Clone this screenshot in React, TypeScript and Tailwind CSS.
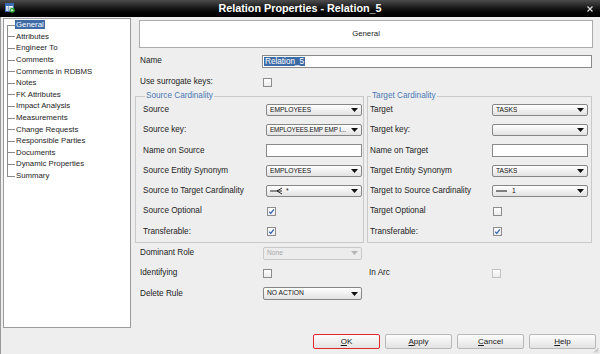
import React from 'react'

const tree = [
    'General',
    'Attributes',
    'Engineer To',
    'Comments',
    'Comments in RDBMS',
    'Notes',
    'FK Attributes',
    'Impact Analysis',
    'Measurements',
    'Change Requests',
    'Responsible Parties',
    'Documents',
    'Dynamic Properties',
    'Summary',
]

function Arrow({ disabled }: { disabled?: boolean }) {
    return (
        <svg viewBox="0 0 7 4" className="h-[4px] w-[7px] shrink-0">
            <path d="M0 0 H7 L3.5 4 Z" fill={disabled ? '#b4b4b4' : '#111'} />
        </svg>
    )
}

function Select({ children, className, disabled }: { children?: React.ReactNode; className: string; disabled?: boolean }) {
    return (
        <div
            className={`flex items-center justify-between gap-[1px] rounded-[2px] border pl-[3px] pr-[3px] leading-none ${
                disabled
                    ? 'border-[#c8c8c8] bg-[#ececec] text-[#a9a9a9]'
                    : 'border-[#868686] bg-gradient-to-b from-white to-[#e2e2e2] text-[#111]'
            } ${className}`}
        >
            <div className="flex min-w-0 items-center overflow-hidden whitespace-nowrap">{children}</div>
            <Arrow disabled={disabled} />
        </div>
    )
}

function Check({ on, disabled, className }: { on?: boolean; disabled?: boolean; className?: string }) {
    return (
        <div
            className={`flex h-[9px] w-[9px] items-center justify-center border bg-gradient-to-b from-white to-[#ebebeb] ${
                disabled ? 'border-[#c2c2c2]' : 'border-[#8c8c8c]'
            } ${className ?? ''}`}
        >
            {on && (
                <svg viewBox="0 0 8 8" className="h-[7px] w-[7px]">
                    <path d="M1.4 4.3 L3.2 6.1 L6.7 1.5" fill="none" stroke="#2d5fb4" strokeWidth="1.4" />
                </svg>
            )}
        </div>
    )
}

function Input({ className, children }: { className: string; children?: React.ReactNode }) {
    return <div className={`flex h-[13px] items-center border border-[#8a8a8a] bg-white ${className}`}>{children}</div>
}

function Row({ label, w, children }: { label: string; w: string; children?: React.ReactNode }) {
    return (
        <div className="flex h-[20.3px] items-center">
            <div className={`shrink-0 text-[8.2px] text-[#1c1c1c] ${w}`}>{label}</div>
            {children}
        </div>
    )
}

function Crow() {
    return (
        <svg viewBox="0 0 13 8" className="mr-[3px] h-[8px] w-[13px]">
            <path d="M0 4 H12 M7 4 L12 1 M7 4 L12 7" fill="none" stroke="#111" strokeWidth="0.9" />
        </svg>
    )
}

function Dash() {
    return (
        <svg viewBox="0 0 11 8" className="mr-[5px] h-[8px] w-[11px]">
            <path d="M0 4 H11" fill="none" stroke="#111" strokeWidth="1" />
        </svg>
    )
}

function Button({ label, first, ok }: { label: string; first: string; ok?: boolean }) {
    return (
        <div
            className={`flex h-[15px] w-[67px] items-center justify-center rounded-[2px] bg-gradient-to-b from-[#fdfdfd] to-[#e2e2e2] text-[8px] text-[#1a1a1a] ${
                ok ? 'border-[1.5px] border-[#e3262b]' : 'border border-[#b8b8b8]'
            }`}
        >
            <span>
                <span className="underline underline-offset-1">{first}</span>
                {label}
            </span>
        </div>
    )
}

export default function App() {
    return (
        <div className="flex h-[354px] w-[600px] flex-col overflow-hidden bg-[#eeeeee] font-['Liberation_Sans',Arial,sans-serif]">
            {/* title bar */}
            <div className="relative flex h-[17px] shrink-0 items-center justify-center bg-gradient-to-b from-[#4c4c4c] via-[#161616] to-black">
                <svg viewBox="0 0 10 10" className="absolute left-[5px] top-[3px] h-[10px] w-[10px]">
                    <rect x="0.5" y="0.5" width="8" height="8" fill="#fff" stroke="#3a6db0" />
                    <rect x="0.5" y="0.5" width="8" height="2.5" fill="#3a6db0" />
                    <path d="M0.5 5 H8.5 M0.5 7 H8.5 M3.5 3 V8.5" stroke="#6f95c8" strokeWidth="0.7" />
                    <circle cx="7.3" cy="7.3" r="2.5" fill="#2fa83a" />
                    <path d="M6.4 6 L8.6 7.3 L6.4 8.6 Z" fill="#fff" />
                </svg>
                <span className="text-[10.8px] font-bold text-white">Relation Properties - Relation_5</span>
                <svg viewBox="0 0 6 6" className="absolute right-[7px] top-[6px] h-[6px] w-[6px]">
                    <path d="M0.5 0.5 L5.5 5.5 M5.5 0.5 L0.5 5.5" stroke="#d8d8d8" strokeWidth="1.3" />
                </svg>
            </div>

            {/* body */}
            <div className="flex h-[311px] shrink-0 border-l border-[#9a9a9a]">
                <div className="ml-[2px] mt-[1px] h-[310px] w-[128px] shrink-0 border border-[#9c9c9c] bg-white">
                    {tree.map((t, i) => (
                        <div key={t} className="flex h-[11.6px] items-center">
                            <div className="relative h-full w-[11px] shrink-0">
                                <div
                                    className={`absolute left-[3px] w-px bg-[#8c8c8c] ${
                                        i === 0 ? 'top-1/2 bottom-0' : i === tree.length - 1 ? 'top-0 h-1/2' : 'inset-y-0'
                                    }`}
                                />
                                <div className="absolute left-[3px] right-0 top-1/2 h-px bg-[#8c8c8c]" />
                            </div>
                            <span
                                className={`px-[1px] text-[7.8px] leading-[9px] ${
                                    i === 0 ? 'bg-[#3d6ba5] text-white' : 'text-[#1c1c1c]'
                                }`}
                            >
                                {t}
                            </span>
                        </div>
                    ))}
                </div>

                <div className="ml-[4px] flex w-[458px] flex-col">
                    <div className="ml-[4px] mt-[3px] flex h-[28px] w-[454px] items-center justify-center border border-[#ababab] bg-white text-[7.8px] text-[#1c1c1c]">
                        General
                    </div>

                    <div className="mt-[7px] flex h-[13px] items-center pl-[5px]">
                        <div className="w-[122px] text-[8.2px] text-[#1c1c1c]">Name</div>
                        <Input className="w-[330px] pl-[1px]">
                            <span className="bg-[#3d6ba5] px-[1px] text-[8.2px] leading-[9px] text-white">Relation_5</span>
                        </Input>
                    </div>

                    <div className="mt-[7px] flex h-[14px] items-center pl-[5px]">
                        <div className="w-[123px] text-[8.2px] text-[#1c1c1c]">Use surrogate keys:</div>
                        <Check />
                    </div>

                    <div className="mt-[7px] flex gap-[3px]">
                        <div className="relative w-[229px] border border-[#c9c9c9] pl-[7px] pt-[3px]">
                            <span className="absolute -top-[6px] left-[9px] bg-[#eeeeee] px-[1px] text-[8.2px] leading-[10px] text-[#4a78b5]">
                                Source Cardinality
                            </span>
                            <Row label="Source" w="w-[123px]">
                                <Select className="h-[12px] w-[96px] text-[6.7px]">EMPLOYEES</Select>
                            </Row>
                            <Row label="Source key:" w="w-[123px]">
                                <Select className="h-[12px] w-[96px] text-[6.3px] tracking-[-0.1px]">EMPLOYEES.EMP EMP I...</Select>
                            </Row>
                            <Row label="Name on Source" w="w-[123px]">
                                <Input className="w-[96px]" />
                            </Row>
                            <Row label="Source Entity Synonym" w="w-[123px]">
                                <Select className="h-[12px] w-[96px] text-[6.7px]">EMPLOYEES</Select>
                            </Row>
                            <Row label="Source to Target Cardinality" w="w-[123px]">
                                <Select className="h-[12px] w-[96px] text-[6.7px]">
                                    <Crow />*
                                </Select>
                            </Row>
                            <Row label="Source Optional" w="w-[124px]">
                                <Check on />
                            </Row>
                            <Row label="Transferable:" w="w-[124px]">
                                <Check on />
                            </Row>
                        </div>

                        <div className="relative w-[225px] border border-[#c9c9c9] pl-[2px] pt-[3px]">
                            <span className="absolute -top-[6px] left-[3px] bg-[#eeeeee] px-[1px] text-[8.2px] leading-[10px] text-[#4a78b5]">
                                Target Cardinality
                            </span>
                            <Row label="Target" w="w-[122px]">
                                <Select className="h-[12px] w-[96px] text-[6.7px]">TASKS</Select>
                            </Row>
                            <Row label="Target key:" w="w-[122px]">
                                <Select className="h-[12px] w-[96px] text-[6.7px]" />
                            </Row>
                            <Row label="Name on Target" w="w-[122px]">
                                <Input className="w-[96px]" />
                            </Row>
                            <Row label="Target Entity Synonym" w="w-[122px]">
                                <Select className="h-[12px] w-[96px] text-[6.7px]">TASKS</Select>
                            </Row>
                            <Row label="Target to Source Cardinality" w="w-[122px]">
                                <Select className="h-[12px] w-[96px] text-[6.7px]">
                                    <Dash />1
                                </Select>
                            </Row>
                            <Row label="Target Optional" w="w-[123px]">
                                <Check />
                            </Row>
                            <Row label="Transferable:" w="w-[123px]">
                                <Check on />
                            </Row>
                        </div>
                    </div>

                    <div className="pl-[5px]">
                        <Row label="Dominant Role" w="w-[123px]">
                            <Select disabled className="h-[13px] w-[99px] text-[6.7px]">None</Select>
                        </Row>
                        <Row label="Identifying" w="w-[123px]">
                            <Check />
                            <div className="w-[97px]" />
                            <div className="w-[123px] text-[8.2px] text-[#1c1c1c]">In Arc</div>
                            <Check disabled />
                        </Row>
                        <Row label="Delete Rule" w="w-[123px]">
                            <Select className="h-[13px] w-[99px] text-[6.7px]">NO ACTION</Select>
                        </Row>
                    </div>
                </div>
            </div>

            {/* footer */}
            <div className="relative flex h-[26px] shrink-0 justify-end gap-[5px] border-l border-[#9a9a9a] pr-[4px] pt-[6px]">
                <Button first="O" label="K" ok />
                <Button first="A" label="pply" />
                <Button first="C" label="ancel" />
                <Button first="H" label="elp" />
                <svg viewBox="0 0 6 6" className="absolute bottom-[1px] right-[1px] h-[6px] w-[6px]">
                    <path d="M5.5 1 L1 5.5 M5.5 3 L3 5.5 M5.5 5 L5 5.5" stroke="#9a9a9a" strokeWidth="0.7" />
                </svg>
            </div>
        </div>
    )
}
